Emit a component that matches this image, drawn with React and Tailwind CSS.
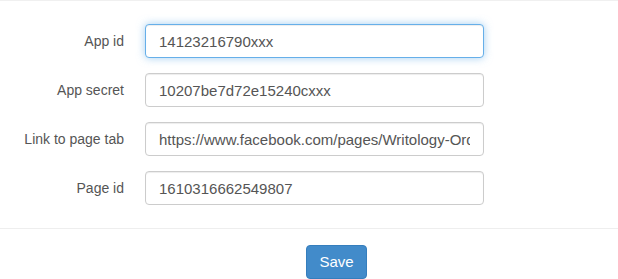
import { useState } from 'react';

const FIELDS = [
  { key: 'appId', label: 'App id', value: '14123216790xxx', focused: true },
  { key: 'appSecret', label: 'App secret', value: '10207be7d72e15240cxxx' },
  { key: 'pageTab', label: 'Link to page tab', value: 'https://www.facebook.com/pages/Writology-Orders/1610316662549807' },
  { key: 'pageId', label: 'Page id', value: '1610316662549807' },
];

export default function App() {
  const [values, setValues] = useState(() =>
    Object.fromEntries(FIELDS.map((f) => [f.key, f.value])),
  );

  return (
    <div
      className="h-[279px] w-[618px] overflow-hidden bg-white text-[#555]"
      style={{ fontFamily: '"Liberation Sans", Arial, sans-serif' }}
    >
      <div className="border-t border-[#f0f0f0] pt-[23px]">
        <div className="flex flex-col gap-[15px]">
          {FIELDS.map((f) => (
            <div key={f.key} className="flex items-center">
              <label className="w-[125px] pr-px text-right text-[14px] leading-[20px] text-[#555]">
                {f.label}
              </label>
              <input
                type="text"
                value={values[f.key]}
                onChange={(e) => setValues((v) => ({ ...v, [f.key]: e.target.value }))}
                className={`ml-[20px] h-[34px] w-[339px] rounded-[4px] border bg-white px-[13px] py-[6px] text-[15px] text-[#555] outline-none ${
                  f.focused
                    ? 'border-[#66afe9] shadow-[inset_0_1px_1px_rgba(0,0,0,0.075),0_0_8px_rgba(102,175,233,0.6)]'
                    : 'border-[#ccc] shadow-[inset_0_1px_1px_rgba(0,0,0,0.075)]'
                }`}
              />
            </div>
          ))}
        </div>

        {/* footer */}
        <div className="mt-[23px] border-t border-[#eee] pt-[16px]">
          <button
            type="button"
            className="ml-[306px] h-[34px] w-[61px] rounded-[4px] border border-[#357ebd] bg-[#428bca] text-[15px] text-white"
          >
            Save
          </button>
        </div>
      </div>
    </div>
  );
}
